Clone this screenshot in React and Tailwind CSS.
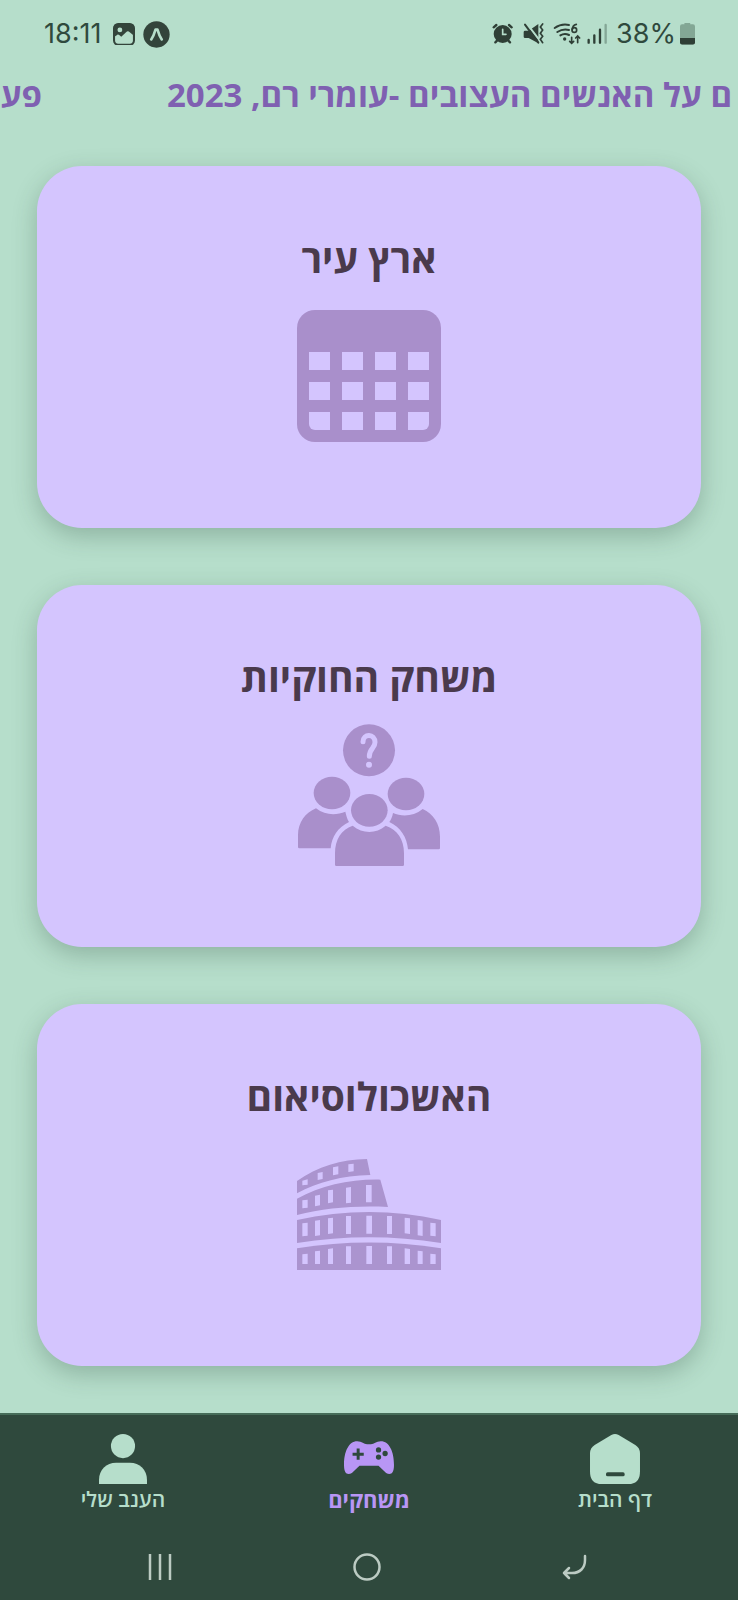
function CalendarIcon() {
  const cols = [117, 216, 315, 414];
  const rows = [396, 486];
  return (
    <svg viewBox="81 270 432 396" className="w-36" aria-hidden="true">
      <rect x="81" y="270" width="432" height="396" rx="54" fill="#a98fcb" />
      <g fill="#d4c5fe">
        {rows.map((y) => cols.map((x) => <rect key={`${x}-${y}`} x={x} y={y} width="63" height="54" />))}
        <path d="M117 576h63v54h-45a18 18 0 0 1-18-18z" />
        <rect x="216" y="576" width="63" height="54" />
        <rect x="315" y="576" width="63" height="54" />
        <path d="M414 576h63v36a18 18 0 0 1-18 18h-45z" />
      </g>
    </svg>
  );
}

function PeopleIcon() {
  return (
    <svg viewBox="201 249 432 432" className="w-36" aria-hidden="true">
      <g fill="#a98fcb">
        <circle cx="417" cy="331" r="78" />
        <ellipse cx="306" cy="459" rx="55" ry="49" />
        <ellipse cx="528" cy="462" rx="55" ry="49" />
        <ellipse cx="418" cy="511" rx="55" ry="49" />
        <path d="M258 505C286 527 320 526 346 515C349 528 352 538 357 546C324 562 305 590 302 625H208Q204 625 204 621V585C204 548 226 518 258 505Z" />
        <path d="M578 507C550 530 515 530 489 519C487 530 483 540 478 546C512 562 531 592 534 628H626Q630 628 630 624V590C630 551 610 522 578 507Z" />
        <path d="M368 557C398 582 438 582 467 557C502 569 522 598 522 640V674Q522 678 518 678H319Q315 678 315 674V640C315 598 334 569 368 557Z" />
      </g>
      <path d="M399 305C399 280 435 280 435 307C435 326 418 325 418 349" fill="none" stroke="#d4c5fe" strokeWidth="15" strokeLinecap="round" />
      <circle cx="417" cy="374" r="9" fill="#d4c5fe" />
    </svg>
  );
}

function ColosseumIcon() {
  return (
    <svg viewBox="201 297 432 333" className="w-36" aria-hidden="true">
      <g fill="#ab94cf">
        <path d="M201 363C262 320 334 298 411 297L421 345C336 347 264 366 201 400Z" />
        <path d="M201 416C274 377 361 357 451 359L474 441C377 436 285 444 201 465Z" />
        <path d="M201 480C345 448 490 448 633 480V549C490 526 345 526 201 549Z" />
        <path d="M201 565C345 542 490 542 633 565V630H201Z" />
      </g>
      <g fill="#d4c5fe">
        <path d="M217 362L233 358V374L217 376ZM263 339L278 336V357L263 360ZM309 322L325 319V343L309 346ZM355 313L371 311V334L355 336Z" />
        <path d="M217 421L233 419V443L217 445ZM255 407L270 404V436L255 439ZM294 391L309 389V427L294 430ZM348 383L363 381V428L348 430ZM408 375H425V427H408Z" />
        <path d="M217 490L233 488V527L217 529ZM255 482L270 480V526L255 528ZM294 475L309 473V520L294 522ZM348 468H363V522H348ZM409 467H426V521H409ZM471 468H486V522H471ZM524 473L540 475V522L524 520ZM563 480L578 482V528L563 526ZM601 488L617 490V529L601 527Z" />
        <path d="M217 583L233 581V612H217ZM255 574L270 572V612H255ZM294 567L309 565V612H294ZM348 559H363V612H348ZM409 558H426V612H409ZM471 559H486V612H471ZM524 565L540 567V612H524ZM563 572L578 574V612H563ZM601 581L617 583V612H601Z" />
      </g>
    </svg>
  );
}

function HomeIcon() {
  return (
    <svg viewBox="308 100 150 152" className="w-[50px]" aria-hidden="true">
      <path d="M372 103Q383 97 394 103L444 133Q458 142 458 158V212C458 241 446 252 408 252H358C320 252 308 241 308 212V158Q308 142 322 133Z" fill="#b6decb" />
      <rect x="356" y="215" width="56" height="12" rx="5" fill="#2f493d" />
    </svg>
  );
}

function GamepadIcon() {
  return (
    <svg viewBox="282 119 152 112" className="w-[50px]" aria-hidden="true">
      <path d="M322 120C337 120 342 129 352 129H364C374 129 379 120 394 120C420 120 434 152 434 192C434 222 421 222 410 216L387 194H329L306 216C295 222 282 222 282 192C282 152 296 120 322 120Z" fill="#b896f5" />
      <path d="M325 142V176M308 159H342" stroke="#2f493d" strokeWidth="9" />
      <g fill="#2f493d">
        <circle cx="387" cy="146" r="8" />
        <circle cx="407" cy="157" r="8" />
        <circle cx="387" cy="168" r="8" />
      </g>
    </svg>
  );
}

function PersonIcon() {
  return (
    <svg viewBox="300 101 143 151" className="w-12" aria-hidden="true">
      <circle cx="371.500" cy="137" r="36" fill="#b6decb" />
      <path d="M300 252V238C300 208 322 187 351 187H392C421 187 443 208 443 238V252Z" fill="#b6decb" />
    </svg>
  );
}

function StatusBar() {
  return (
    <header className="flex h-[68px] items-center justify-between pr-[43px] pl-[44px] font-['Inter',sans-serif] text-[27px] text-[#2f493d]">
      <div className="flex items-center gap-2">
        <span>18:11</span>
        <svg viewBox="344 67 64 66" className="ml-1 w-[22px]" aria-hidden="true">
          <rect x="347" y="70" width="58" height="60" rx="12" fill="none" stroke="#33443b" strokeWidth="6" />
          <path d="M346 108V80Q346 69 358 69H394Q406 69 406 80V105L390 92Q386 90 382 94L368 107L362 102Q358 99 354 103Z" fill="#33443b" />
          <circle cx="364" cy="87" r="7" fill="#b6decb" />
        </svg>
        <svg viewBox="432 59 82 82" className="w-[27px]" aria-hidden="true">
          <circle cx="473" cy="100" r="40" fill="#33443b" />
          <path d="M457 115C463 106 468 92 470 85H476C478 92 483 106 489 115" fill="none" stroke="#b6decb" strokeWidth="8" strokeLinecap="round" strokeLinejoin="round" />
        </svg>
      </div>
      <div className="flex items-center">
        <svg viewBox="375 62 348 70" className="w-[116px]" aria-hidden="true" fill="none" stroke="#2f3f36" strokeLinecap="round">
          <circle cx="407" cy="98" r="27" fill="#2f3f36" stroke="none" />
          <path d="M380 78L388 71M434 78L426 71M390 118L385 123M424 118L429 123" strokeWidth="7" />
          <path d="M407 84V99H417" stroke="#b6decb" strokeWidth="5" />
          <path d="M474 88H485L514 68V126L485 110H474Q470 110 470 106V92Q470 88 474 88Z" fill="#2f3f36" stroke="none" />
          <path d="M479 66L523 124" stroke="#b6decb" strokeWidth="6" />
          <path d="M474 70L514 124" strokeWidth="6" />
          <path d="M527 68L520 77L527 86L520 96L527 105L520 114L527 124" strokeWidth="5" />
          <path d="M563 80Q583 66 606 71M571 92Q588 81 606 86M580 102Q593 94 606 101" strokeWidth="6" />
          <circle cx="593" cy="113" r="5" fill="#2f3f36" stroke="none" />
          <path d="M628 69Q616 72 616 85" strokeWidth="5" />
          <circle cx="622" cy="86" r="7" strokeWidth="5" />
          <path d="M614 108V126M608 120L614 126L620 120M632 124V104M626 110L632 104L638 110" strokeWidth="5" />
          <path d="M665 116V124M682 102V124M699 85V124" strokeWidth="7" />
          <path d="M716 71V124" stroke="#84a796" strokeWidth="7" />
        </svg>
        <span className="ml-2">38%</span>
        <svg viewBox="932 66 44 63" className="ml-1 w-[15px]" aria-hidden="true">
          <path d="M945 66H962V70H970Q976 70 976 76V123Q976 129 970 129H938Q932 129 932 123V76Q932 70 938 70H945Z" fill="#83a795" />
          <path d="M932 110H976V123Q976 129 970 129H938Q932 129 932 123Z" fill="#2f3f36" />
        </svg>
      </div>
    </header>
  );
}

const games = [
  { title: "ארץ עיר", Icon: CalendarIcon },
  { title: "משחק החוקיות", Icon: PeopleIcon },
  { title: "האשכולוסיאום", Icon: ColosseumIcon },
];

const tabs = [
  { label: "דף הבית", Icon: HomeIcon, active: false },
  { label: "משחקים", Icon: GamepadIcon, active: true },
  { label: "הענב שלי", Icon: PersonIcon, active: false },
];

export default function App() {
  return (
    <div className="flex min-h-screen flex-col overflow-x-hidden bg-[#b6decb] font-['Open_Sans','DejaVu_Sans',sans-serif]">
      <StatusBar />
      <div className="flex gap-[125px] overflow-hidden text-[33px] leading-[54px] font-bold whitespace-nowrap text-[#7f60b1]">
        <span dir="rtl" className="w-[42px] shrink-0">פעם</span>
        <span dir="rtl" className="shrink-0">ם על האנשים העצובים -עומרי רם, 2023</span>
      </div>
      <main dir="rtl" className="flex flex-1 flex-col gap-[57px] px-[37px] pt-11 pb-[46px]">
        {games.map(({ title, Icon }) => (
          <button
            key={title}
            type="button"
            className="flex flex-col items-center rounded-[45px] bg-[#d4c5fe] pt-[70px] pb-20 shadow-[0_8px_24px_rgba(40,70,55,0.28)]"
          >
            <span className="text-[39px] leading-[44px] font-bold text-[#4a3a4c]">{title}</span>
            <span className="mt-6 flex size-36 items-center justify-center">
              <Icon />
            </span>
          </button>
        ))}
      </main>
      <footer className="border-t-2 border-[#466c59] bg-[#2f493d]">
        <nav dir="rtl" className="grid grid-cols-3 pt-[19px]">
          {tabs.map(({ label, Icon, active }) => (
            <a
              key={label}
              href="#"
              aria-current={active ? "page" : undefined}
              className={`flex flex-col items-center leading-[30px] ${active ? "text-[22px] font-bold text-[#b896f5]" : "text-[21px] font-semibold text-[#b6decb]"}`}
            >
              <span className="flex h-[50px] items-center">
                <Icon />
              </span>
              <span>{label}</span>
            </a>
          ))}
        </nav>
        <div className="flex h-[86px] items-center justify-center pt-5 pr-1">
          <button type="button" aria-label="Recent apps" className="flex w-[207px] justify-center">
            <svg viewBox="0 0 28 28" className="w-7" fill="none" stroke="#bccbc3" strokeWidth="2.500">
              <path d="M4 1V27M14 1V27M24 1V27" />
            </svg>
          </button>
          <button type="button" aria-label="Home" className="flex w-[207px] justify-center">
            <svg viewBox="0 0 28 28" className="w-7" fill="none" stroke="#bccbc3" strokeWidth="2.500">
              <circle cx="14" cy="14" r="12.500" />
            </svg>
          </button>
          <button type="button" aria-label="Back" className="flex w-[207px] justify-center">
            <svg viewBox="0 0 28 28" className="w-7" fill="none" stroke="#bccbc3" strokeWidth="2.500" strokeLinecap="round" strokeLinejoin="round">
              <path d="M25 3V7C25 15 20 20 12 20H4M9 15L4 20L9 25" />
            </svg>
          </button>
        </div>
      </footer>
    </div>
  );
}
